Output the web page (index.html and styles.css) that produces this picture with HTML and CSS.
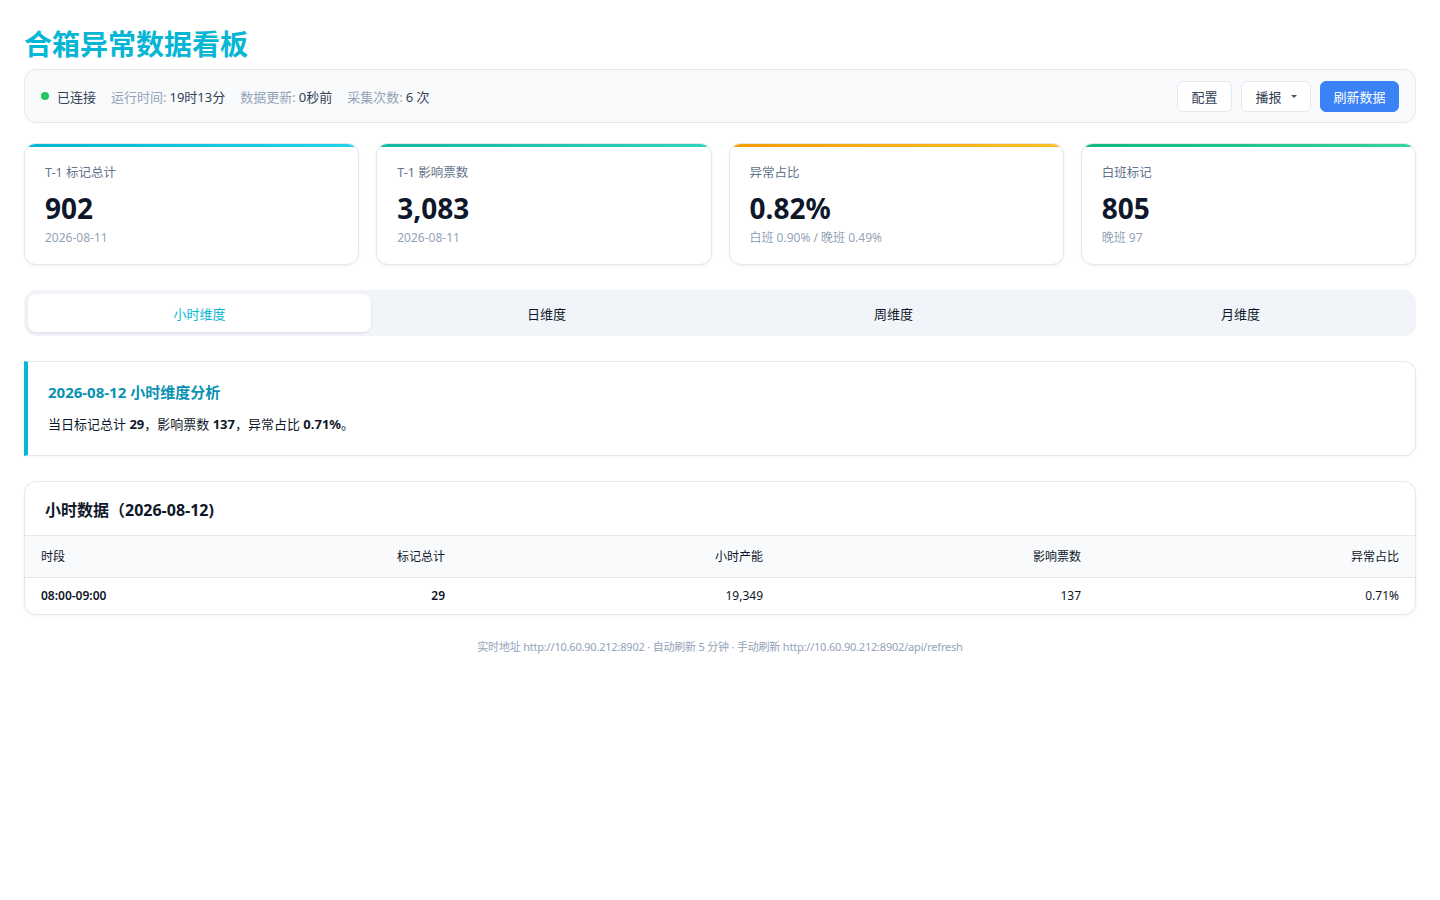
FILE: index.html
```html
<!DOCTYPE html>
<html lang="zh-CN">
<head>
<meta charset="utf-8">
<title>合箱异常数据看板</title>
<link rel="stylesheet" href="styles.css">
</head>
<body>
<div class="page">
  <h1 class="title">合箱异常数据看板</h1>

  <div class="status-bar">
    <div class="status-left">
      <span class="status-item"><span class="dot"></span><span class="conn">已连接</span></span>
      <span class="status-item"><span class="lbl">运行时间:</span> <span class="val">19时13分</span></span>
      <span class="status-item"><span class="lbl">数据更新:</span> <span class="val">0秒前</span></span>
      <span class="status-item"><span class="lbl">采集次数:</span> <span class="val">6 次</span></span>
    </div>
    <div class="status-right">
      <button class="btn btn-config">配置</button>
      <button class="btn btn-report">播报 <span class="caret"></span></button>
      <button class="btn btn-primary">刷新数据</button>
    </div>
  </div>

  <div class="cards">
    <div class="card c1">
      <div class="card-label">T-1 标记总计</div>
      <div class="card-value">902</div>
      <div class="card-sub">2026-08-11</div>
    </div>
    <div class="card c2">
      <div class="card-label">T-1 影响票数</div>
      <div class="card-value">3,083</div>
      <div class="card-sub">2026-08-11</div>
    </div>
    <div class="card c3">
      <div class="card-label">异常占比</div>
      <div class="card-value">0.82%</div>
      <div class="card-sub">白班 0.90% / 晚班 0.49%</div>
    </div>
    <div class="card c4">
      <div class="card-label">白班标记</div>
      <div class="card-value">805</div>
      <div class="card-sub">晚班 97</div>
    </div>
  </div>

  <div class="tabs">
    <div class="tab active">小时维度</div>
    <div class="tab">日维度</div>
    <div class="tab">周维度</div>
    <div class="tab">月维度</div>
  </div>

  <div class="analysis">
    <div class="analysis-title">2026-08-12 小时维度分析</div>
    <div class="analysis-text">当日标记总计 <b>29</b>，影响票数 <b>137</b>，异常占比 <b>0.71%</b>。</div>
  </div>

  <div class="table-card">
    <div class="table-title">小时数据（2026-08-12)</div>
    <table class="data-table">
      <colgroup>
        <col class="w-a">
        <col class="w-a">
        <col class="w-b">
        <col class="w-b">
        <col class="w-b">
      </colgroup>
      <thead>
        <tr>
          <th class="col-first">时段</th>
          <th>标记总计</th>
          <th>小时产能</th>
          <th>影响票数</th>
          <th>异常占比</th>
        </tr>
      </thead>
      <tbody>
        <tr>
          <td class="col-first strong">08:00-09:00</td>
          <td class="strong">29</td>
          <td>19,349</td>
          <td>137</td>
          <td>0.71%</td>
        </tr>
      </tbody>
    </table>
  </div>

  <div class="footer">实时地址 http://10.60.90.212:8902 · 自动刷新 5 分钟 · 手动刷新 http://10.60.90.212:8902/api/refresh</div>
</div>
</body>
</html>
```

FILE: styles.css
```css
* { box-sizing: border-box; }
html, body { margin: 0; padding: 0; background: #ffffff; }
body {
  font-family: "Noto Sans", "Noto Sans CJK SC", sans-serif;
  color: #0f172a;
}
.page { padding: 23px 24px 40px; }

.title {
  margin: 0 0 6px;
  font-size: 28px;
  line-height: 40px;
  font-weight: 700;
  color: #06b6d4;
  font-family: "Noto Sans CJK SC", sans-serif;
}

.status-bar {
  display: flex;
  align-items: center;
  justify-content: space-between;
  height: 54px;
  padding: 0 16px;
  background: #f8fafc;
  border: 1px solid #e2e8f0;
  border-radius: 12px;
}
.status-left { display: flex; align-items: center; gap: 15px; font-size: 13px; }
.status-item { display: flex; align-items: center; gap: 3px; }
.dot { width: 8px; height: 8px; border-radius: 50%; background: #22c55e; margin-right: 5px; }
.conn { color: #334155; }
.lbl { color: #94a3b8; }
.val { color: #334155; }
.status-right { display: flex; gap: 9px; }
.btn {
  font-family: inherit;
  font-size: 13px;
  height: 31px;
  padding: 0;
  border: 1px solid #e2e8f0;
  border-radius: 6px;
  background: #ffffff;
  color: #334155;
  display: flex;
  align-items: center;
  justify-content: center;
  gap: 6px;
}
.btn-config { width: 55px; }
.btn-report { width: 70px; }
.btn-primary { width: 79px; background: #3b82f6; border-color: #3b82f6; color: #ffffff; }
.caret {
  width: 0; height: 0;
  border-left: 3px solid transparent;
  border-right: 3px solid transparent;
  border-top: 3px solid #475569;
  margin-left: 3px;
}

.cards {
  display: grid;
  grid-template-columns: repeat(4, 1fr);
  gap: 17px;
  margin-top: 20px;
}
.card {
  height: 122px;
  border: 1px solid #e2e8f0;
  border-radius: 12px;
  background: #ffffff;
  padding: 20px 20px 0;
  box-shadow: 0 1px 3px rgba(15, 23, 42, 0.06);
  position: relative;
  overflow: hidden;
}
.card::before {
  content: "";
  position: absolute;
  left: 0; right: 0; top: 0;
  height: 3px;
}
.c1::before { background: linear-gradient(90deg, #06b6d4, #22d3ee); }
.c2::before { background: linear-gradient(90deg, #14b8a6, #2dd4bf); }
.c3::before { background: linear-gradient(90deg, #f59e0b, #fbbf24); }
.c4::before { background: linear-gradient(90deg, #10b981, #34d399); }
.card-label { font-size: 12.5px; color: #64748b; line-height: 18px; }
.card-value { font-size: 28px; font-weight: 700; color: #0f172a; line-height: 36px; margin-top: 8px; }
.card-sub { font-size: 12px; color: #94a3b8; line-height: 16px; margin-top: 4px; }

.tabs {
  display: grid;
  grid-template-columns: repeat(4, 1fr);
  gap: 4px;
  margin-top: 25px;
  padding: 4px;
  background: #f1f5f9;
  border-radius: 12px;
  height: 46px;
}
.tab {
  display: flex;
  align-items: center;
  justify-content: center;
  font-size: 13px;
  color: #0f172a;
  border-radius: 8px;
}
.tab.active {
  background: #ffffff;
  color: #06b6d4;
  box-shadow: 0 1px 3px rgba(15, 23, 42, 0.1);
}

.analysis {
  margin-top: 25px;
  height: 95px;
  border: 1px solid #e2e8f0;
  border-left: 4px solid #06b6d4;
  border-radius: 0 12px 12px 0;
  padding: 19px 20px 0;
  box-shadow: 0 1px 3px rgba(15, 23, 42, 0.05);
}
.analysis-title { font-size: 15px; font-weight: 700; color: #0891b2; line-height: 22px; }
.analysis-text { font-size: 13px; color: #0f172a; line-height: 20px; margin-top: 11px; }
.analysis-text b { font-weight: 700; }

.table-card {
  margin-top: 25px;
  border: 1px solid #e2e8f0;
  border-radius: 12px;
  overflow: hidden;
  box-shadow: 0 1px 3px rgba(15, 23, 42, 0.05);
}
.table-title {
  height: 54px;
  display: flex;
  align-items: center;
  padding: 0 20px;
  font-size: 16px;
  font-weight: 700;
  color: #0f172a;
  border-bottom: 1px solid #e2e8f0;
}
.data-table { width: 100%; border-collapse: collapse; font-size: 12px; table-layout: fixed; }
.w-a { width: 218px; }
.data-table th {
  background: #f8fafc;
  font-weight: 400;
  color: #0f172a;
  height: 41px;
  padding: 0 16px;
  text-align: right;
  border-bottom: 1px solid #e2e8f0;
}
.data-table td {
  height: 37px;
  padding: 0 16px;
  text-align: right;
  color: #0f172a;
}
.data-table .col-first { text-align: left; }
.data-table td.strong { font-weight: 600; }

.footer {
  margin-top: 23px;
  text-align: center;
  font-size: 11px;
  color: #94a3b8;
  letter-spacing: -0.2px;
}
```
